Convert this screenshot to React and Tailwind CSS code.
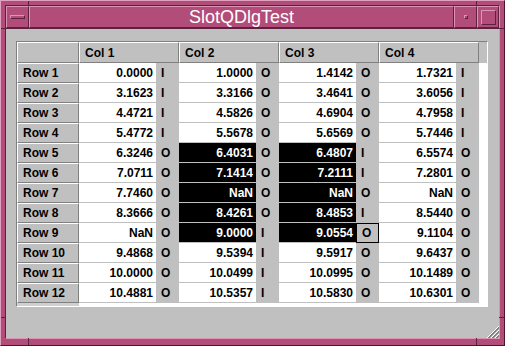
const data = [
  [['0.0000', 'I'], ['1.0000', 'O'], ['1.4142', 'O'], ['1.7321', 'I']],
  [['3.1623', 'I'], ['3.3166', 'O'], ['3.4641', 'O'], ['3.6056', 'I']],
  [['4.4721', 'I'], ['4.5826', 'O'], ['4.6904', 'O'], ['4.7958', 'I']],
  [['5.4772', 'I'], ['5.5678', 'O'], ['5.6569', 'O'], ['5.7446', 'I']],
  [['6.3246', 'O'], ['6.4031', 'O'], ['6.4807', 'I'], ['6.5574', 'O']],
  [['7.0711', 'O'], ['7.1414', 'O'], ['7.2111', 'I'], ['7.2801', 'O']],
  [['7.7460', 'O'], ['NaN', 'O'], ['NaN', 'O'], ['NaN', 'O']],
  [['8.3666', 'O'], ['8.4261', 'O'], ['8.4853', 'I'], ['8.5440', 'O']],
  [['NaN', 'O'], ['9.0000', 'I'], ['9.0554', 'O'], ['9.1104', 'O']],
  [['9.4868', 'O'], ['9.5394', 'I'], ['9.5917', 'O'], ['9.6437', 'O']],
  [['10.0000', 'O'], ['10.0499', 'I'], ['10.0995', 'O'], ['10.1489', 'O']],
  [['10.4881', 'O'], ['10.5357', 'I'], ['10.5830', 'O'], ['10.6301', 'O']],
];

// selected (black) cells: rows 5-9, cols 2-3
const isSelected = (r, c) => r >= 4 && r <= 8 && (c === 1 || c === 2);
const isFocus = (r, c) => r === 8 && c === 2;

const raised = 'border border-t-white border-l-white border-r-[#808080] border-b-[#808080]';
const frameRaised = 'border border-t-[#d995b3] border-l-[#d995b3] border-r-[#5c2140] border-b-[#5c2140]';

function TitleBar() {
  return (
    <div className="flex h-[23px] border-b border-[#5c2140] bg-[#b24c79]">
      <div className={`w-[23px] flex items-center justify-center ${frameRaised}`}>
        <div className={`w-[15px] h-[4px] ${frameRaised}`} />
      </div>
      <div className={`flex-1 flex items-center justify-center text-white text-[18px] ${frameRaised}`}>
        SlotQDlgTest
      </div>
      <div className={`w-[23px] flex items-center justify-center ${frameRaised}`}>
        <div className={`w-[4px] h-[4px] ${frameRaised}`} />
      </div>
      <div className={`w-[22px] flex items-center justify-center ${frameRaised}`}>
        <div className={`w-[15px] h-[15px] ${frameRaised}`} />
      </div>
    </div>
  );
}

function Grip() {
  return (
    <svg width="13" height="13" viewBox="0 0 13 13" className="self-end mt-auto">
      {[1, 5, 9].map((k) => (
        <g key={k}>
          <line x1={k} y1="13" x2="13" y2={k} stroke="#ffffff" strokeWidth="1" />
          <line x1={k + 1} y1="13" x2="13" y2={k + 1} stroke="#808080" strokeWidth="1" />
          <line x1={k + 2} y1="13" x2="13" y2={k + 2} stroke="#808080" strokeWidth="1" />
        </g>
      ))}
    </svg>
  );
}

function Table() {
  return (
    <div className="w-[472px] h-[266px] border border-t-[#808080] border-l-[#808080] border-r-white border-b-white bg-white flex flex-col text-[12px] font-bold text-black">
      <div className="flex h-[21px]">
        <div className={`w-[62px] bg-[#c0c0c0] ${raised}`} />
        {['Col 1', 'Col 2', 'Col 3', 'Col 4'].map((c) => (
          <div key={c} className={`w-[100px] bg-[#c0c0c0] flex items-center pl-[5px] ${raised}`}>
            {c}
          </div>
        ))}
        <div className="flex-1 bg-[#c0c0c0]" />
      </div>
      {data.map((row, r) => (
        <div key={r} className="flex h-[20px]">
          <div className={`w-[62px] bg-[#c0c0c0] flex items-center pl-[5px] ${raised}`}>Row {r + 1}</div>
          {row.map(([v, s], c) => (
            <div key={c} className="flex w-[100px]">
              <div
                className={`w-[77px] flex items-center justify-end pr-[3px] border-b border-[#c0c0c0] ${
                  isSelected(r, c) ? 'bg-black text-white' : 'bg-white'
                }`}
              >
                {v}
              </div>
              <div
                className={`w-[23px] flex items-center pl-[5px] bg-[#c0c0c0] ${
                  isFocus(r, c) ? 'border border-black pl-[4px]' : ''
                }`}
              >
                {s}
              </div>
            </div>
          ))}
          <div className="flex-1 bg-white" />
        </div>
      ))}
      <div className="flex flex-1">
        <div className="w-[62px] bg-[#d0d0d0]" />
        <div className="flex-1 bg-white" />
      </div>
    </div>
  );
}

export default function App() {
  return (
    <div className="relative w-[505px] h-[346px] bg-[#b24c79] border border-t-[#e0a2be] border-l-[#e0a2be] border-r-[#4a1630] border-b-[#4a1630] pt-[4px] px-[4px] pb-[6px] flex flex-col font-['Liberation_Sans',Arial,sans-serif]">
      {/* resize-border corner separators */}
      <div className="absolute left-0 top-[27px] w-[5px] h-[1px] bg-[#5c2140]" />
      <div className="absolute right-0 top-[27px] w-[5px] h-[1px] bg-[#5c2140]" />
      <div className="absolute left-0 bottom-[27px] w-[5px] h-[1px] bg-[#5c2140]" />
      <div className="absolute right-0 bottom-[27px] w-[5px] h-[1px] bg-[#5c2140]" />
      <div className="absolute top-0 left-[27px] h-[5px] w-[1px] bg-[#5c2140]" />
      <div className="absolute top-0 right-[27px] h-[5px] w-[1px] bg-[#5c2140]" />
      <div className="absolute bottom-0 left-[27px] h-[7px] w-[1px] bg-[#5c2140]" />
      <div className="absolute bottom-0 right-[27px] h-[7px] w-[1px] bg-[#5c2140]" />

      <div className="flex flex-col flex-1 border border-t-[#5c2140] border-l-[#5c2140] border-r-[#d995b3] border-b-[#d995b3]">
        <TitleBar />
        <div className="flex-1 bg-[#c0c0c0] flex flex-col pl-[10px] pt-[12px]">
          <Table />
          <Grip />
        </div>
      </div>
    </div>
  );
}
